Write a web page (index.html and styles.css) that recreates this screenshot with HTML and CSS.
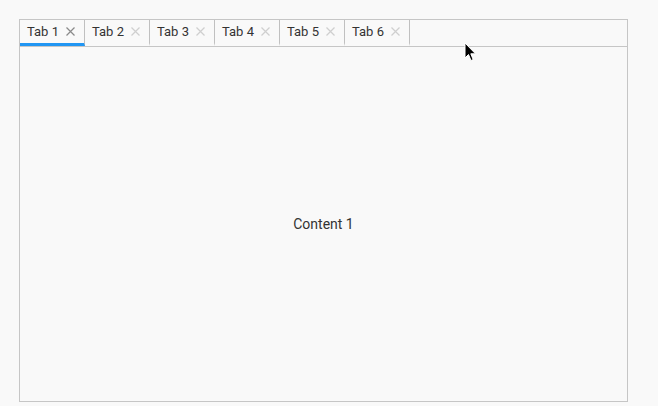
FILE: index.html
```html
<!DOCTYPE html>
<html lang="en">
<head>
  <meta charset="UTF-8" />
  <title>Tabs</title>
  <link rel="stylesheet" href="styles.css">
</head>
<body>
  <div class="tabs">
    <ul class="tab-bar">
      <li class="tab active">Tab 1 <svg class="close" viewBox="0 0 9 9"><path d="M0.5 0.5 L8.5 8.5 M8.5 0.5 L0.5 8.5"/></svg></li>
      <li class="tab">Tab 2 <svg class="close" viewBox="0 0 9 9"><path d="M0.5 0.5 L8.5 8.5 M8.5 0.5 L0.5 8.5"/></svg></li>
      <li class="tab">Tab 3 <svg class="close" viewBox="0 0 9 9"><path d="M0.5 0.5 L8.5 8.5 M8.5 0.5 L0.5 8.5"/></svg></li>
      <li class="tab">Tab 4 <svg class="close" viewBox="0 0 9 9"><path d="M0.5 0.5 L8.5 8.5 M8.5 0.5 L0.5 8.5"/></svg></li>
      <li class="tab">Tab 5 <svg class="close" viewBox="0 0 9 9"><path d="M0.5 0.5 L8.5 8.5 M8.5 0.5 L0.5 8.5"/></svg></li>
      <li class="tab">Tab 6 <svg class="close" viewBox="0 0 9 9"><path d="M0.5 0.5 L8.5 8.5 M8.5 0.5 L0.5 8.5"/></svg></li>
    </ul>
    <div class="tab-content">Content 1</div>
  </div>

  <!-- mouse pointer -->
  <svg class="cursor" width="14" height="22" viewBox="0 0 14 22">
    <path d="M1 1 L1 16 L4.5 12.5 L7 18.5 L9.2 17.6 L6.8 11.8 L11.5 11.8 Z" fill="#000" stroke="#fff" stroke-width="1"/>
  </svg>
</body>
</html>
```

FILE: styles.css
```css
* {
  margin: 0; padding: 0; box-sizing: border-box;
  font-family: Roboto, Arial, sans-serif;
}

body {
  background-color: #f9f9f9;
  color: #333;
  position: relative;
  height: 406px;
  overflow: hidden;
}

.tabs {
  margin: 19px 0 0 19px;
  width: 609px;
  height: 383px;
  border: 1px solid #c6c6c6;
  display: flex;
  flex-direction: column;
}

.tab-bar {
  display: flex;
  list-style: none;
  height: 27px;
  border-bottom: 1px solid #c6c6c6;
}

.tab {
  width: 65px;
  height: 26px;
  padding: 0 0 0 7px;
  border-right: 1px solid #c0c0c0;
  border-bottom: 3px solid transparent;
  font-size: 13px;
  line-height: 23px;
  display: flex;
  align-items: center;
  gap: 7px;
  white-space: nowrap;
}

.tab.active {
  border-bottom-color: #2196f3;
}

.close {
  width: 9px;
  height: 9px;
  stroke: #cfcfcf;
  stroke-width: 1.2;
  fill: none;
}

.tab.active .close {
  stroke: #8a8a8a;
}

.tab-content {
  flex: 1;
  display: flex;
  align-items: center;
  justify-content: center;
  font-size: 14px;
}

.cursor {
  position: absolute;
  left: 464px;
  top: 42px;
}
```
